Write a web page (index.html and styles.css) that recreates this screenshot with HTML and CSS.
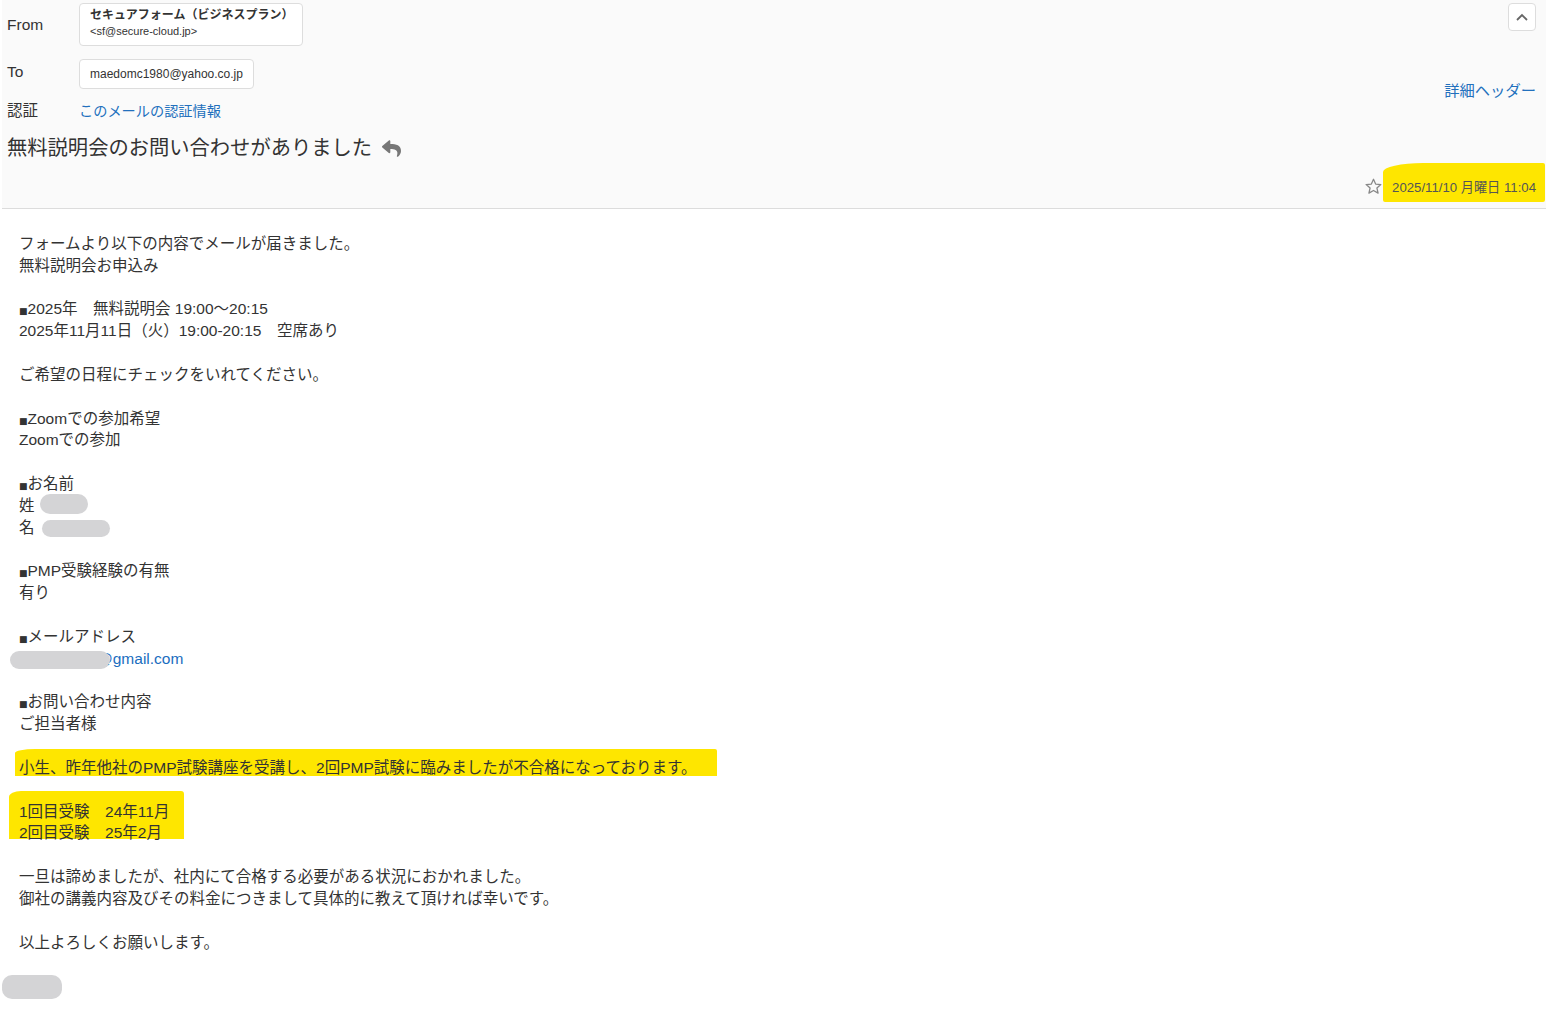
FILE: index.html
```html
<!DOCTYPE html>
<html lang="ja">
<head>
    <meta charset="UTF-8">
    <meta name="viewport" content="width=device-width, initial-scale=1.0">
    <title>無料説明会のお問い合わせがありました</title>
    <link rel="stylesheet" href="styles.css">
</head>
<body>
    <header class="mail-head">
        <div class="head-top">
            <div class="head-fields">
                <div class="field field--from">
                    <span class="label">From</span>
                    <div class="addr-box addr-box--from">
                        <div class="sender-name">セキュアフォーム（ビジネスプラン）</div>
                        <div class="sender-mail">&lt;sf@secure-cloud.jp&gt;</div>
                    </div>
                </div>
                <div class="field field--to">
                    <span class="label">To</span>
                    <div class="addr-box addr-box--to">maedomc1980@yahoo.co.jp</div>
                </div>
                <div class="field field--auth">
                    <span class="label">認証</span>
                    <a class="link auth-link" href="#">このメールの認証情報</a>
                </div>
                <h1 class="subject">無料説明会のお問い合わせがありました
                    <svg class="reply-icon" viewBox="0 0 512 512" width="19" height="19"><path d="M8.3 189.8L184.3 37.9C199.7 24.5 224 35.3 224 56v80.1c160.6 1.8 288 34 288 186.2 0 61.4-39.6 122.3-83.3 154.1-13.7 9.9-33.1-2.5-28.1-18.6 45.3-145-21.5-183.5-176.6-185.7V360c0 20.7-24.3 31.5-39.7 18.2l-176-152c-11.1-9.6-11.1-26.8 0-36.4z"/></svg>
                </h1>
            </div>
            <div class="head-side">
                <button class="collapse-btn">
                    <svg viewBox="0 0 16 16" width="16" height="16"><path d="M3 11l5-5 5 5" fill="none" stroke="#666" stroke-width="1.8"/></svg>
                </button>
                <a class="link detail-link" href="#">詳細ヘッダー</a>
            </div>
        </div>
        <div class="head-date">
            <svg class="star" viewBox="0 0 24 24" width="19" height="19"><path d="M12 2.8l2.7 6.1 6.6.6-5 4.4 1.5 6.5L12 17l-5.8 3.4 1.5-6.5-5-4.4 6.6-.6z" fill="none" stroke="#888" stroke-width="1.6" stroke-linejoin="round"/></svg>
            <span class="date">2025/11/10 月曜日 11:04</span>
        </div>
    </header>

    <main class="mail-body">
        <div class="para">
            <div class="line">フォームより以下の内容でメールが届きました。</div>
            <div class="line">無料説明会お申込み</div>
        </div>
        <div class="para">
            <div class="line"><span class="sq">■</span>2025年　無料説明会 19:00～20:15</div>
            <div class="line">2025年11月11日（火）19:00-20:15　空席あり</div>
        </div>
        <div class="para">
            <div class="line">ご希望の日程にチェックをいれてください。</div>
        </div>
        <div class="para">
            <div class="line"><span class="sq">■</span>Zoomでの参加希望</div>
            <div class="line">Zoomでの参加</div>
        </div>
        <div class="para">
            <div class="line"><span class="sq">■</span>お名前</div>
            <div class="line">姓<span class="redact redact--sei"></span></div>
            <div class="line">名<span class="redact redact--mei"></span></div>
        </div>
        <div class="para">
            <div class="line"><span class="sq">■</span>PMP受験経験の有無</div>
            <div class="line">有り</div>
        </div>
        <div class="para">
            <div class="line"><span class="sq">■</span>メールアドレス</div>
            <div class="line"><span class="redact redact--mail"></span><a class="link mail-link" href="#">@gmail.com</a></div>
        </div>
        <div class="para">
            <div class="line"><span class="sq">■</span>お問い合わせ内容</div>
            <div class="line">ご担当者様</div>
        </div>
        <div class="para marker marker--one">
            <div class="line">小生、昨年他社のPMP試験講座を受講し、2回PMP試験に臨みましたが不合格になっております。</div>
        </div>
        <div class="para marker marker--two">
            <div class="line">1回目受験　24年11月</div>
            <div class="line">2回目受験　25年2月</div>
        </div>
        <div class="para">
            <div class="line">一旦は諦めましたが、社内にて合格する必要がある状況におかれました。</div>
            <div class="line">御社の講義内容及びその料金につきまして具体的に教えて頂ければ幸いです。</div>
        </div>
        <div class="para">
            <div class="line">以上よろしくお願いします。</div>
        </div>
        <div class="para">
            <div class="line"><span class="redact redact--sign"></span></div>
        </div>
    </main>
</body>
</html>
```

FILE: styles.css
```css
body{
    margin: 0;
    background: #fff;
    color: #333;
    font-family: "Liberation Sans", "Noto Sans CJK JP", sans-serif;
}
.mail-head{
    margin-left: 2px;
    padding: 3px 10px 10px 5px;
    background: #fafafa;
    border-bottom: 1px solid #dcdcdc;
}
.head-top{
    display: flex;
    justify-content: space-between;
}
.field{
    display: flex;
    align-items: center;
}
.label{
    width: 72px;
    font-size: 15.5px;
    line-height: 20px;
    color: #333;
}
.addr-box{
    box-sizing: border-box;
    background: #fff;
    border: 1px solid #ddd;
    border-radius: 4px;
    padding: 0 10px;
    color: #333;
}
.addr-box--from{
    width: 224px;
    height: 43px;
    padding-top: 4px;
}
.sender-name{
    font-size: 12px;
    font-weight: bold;
    line-height: 15px;
}
.sender-mail{
    font-size: 11px;
    line-height: 17px;
}
.field--to{
    margin-top: 13px;
}
.field--to .label{
    margin-top: -4px;
}
.addr-box--to{
    height: 30px;
    line-height: 28px;
    font-size: 12px;
}
.field--auth{
    margin-top: 12px;
}
.link{
    color: #2270bd;
    text-decoration: none;
}
.auth-link{
    font-size: 14.2px;
    line-height: 20px;
}
.subject{
    margin: 14px 0 0;
    font-size: 20.3px;
    font-weight: normal;
    line-height: 26px;
    color: #333;
    display: flex;
    align-items: center;
    gap: 10px;
}
.reply-icon{
    fill: #777;
}
.head-side{
    display: flex;
    flex-direction: column;
    align-items: flex-end;
}
.collapse-btn{
    width: 28px;
    height: 28px;
    padding: 0;
    background: #fff;
    border: 1px solid #ddd;
    border-radius: 4px;
    display: flex;
    align-items: center;
    justify-content: center;
}
.detail-link{
    margin-top: 50px;
    font-size: 15.3px;
    line-height: 20px;
}
.head-date{
    margin-top: 13px;
    height: 24px;
    display: flex;
    justify-content: flex-end;
    align-items: center;
    gap: 9px;
}
.date{
    position: relative;
    z-index: 0;
    font-size: 13.2px;
    color: #555;
}
.date::before{
    content: "";
    position: absolute;
    z-index: -1;
    top: -14px;
    bottom: -6px;
    left: -9px;
    right: -9px;
    background: #fee600;
    border-radius: 40px 2px 2px 2px / 9px 2px 2px 2px;
}
.mail-body{
    padding: 24px 19px;
    font-size: 15.5px;
    line-height: 21.84px;
}
.para{
    margin-bottom: 21.84px;
}
.line{
    height: 21.84px;
    white-space: nowrap;
}
.sq{
    font-family: "DejaVu Sans", sans-serif;
    font-size: 9px;
}
.mail-link{
    color: #1a6dc0;
}
.redact{
    display: inline-block;
    background: #d4d4d6;
    border-radius: 10px;
    vertical-align: middle;
}
.redact--sei{
    width: 48px;
    height: 20px;
    margin-left: 5px;
    margin-top: -6px;
}
.redact--mei{
    width: 68px;
    height: 17px;
    margin-left: 7px;
}
.redact--mail{
    position: relative;
    z-index: 1;
    width: 100px;
    height: 18px;
    margin-left: -9px;
    margin-right: -13px;
}
.redact--sign{
    width: 60px;
    height: 20px;
    margin-left: -17px;
    border-radius: 12px;
    box-shadow: 0 2px 0 #d4d4d6, 0 -2px 0 #d4d4d6;
}
.marker{
    position: relative;
    z-index: 0;
    width: fit-content;
}
.marker::before{
    content: "";
    position: absolute;
    z-index: -1;
    background: #fee600;
}
.marker--one::before{
    top: -8px;
    bottom: 3px;
    left: -4px;
    right: -20px;
    border-radius: 20px 2px 0 0 / 4px 2px 0 0;
}
.marker--two::before{
    top: -10px;
    bottom: 5px;
    left: -10px;
    right: -15px;
    border-radius: 12px 3px 0 0 / 6px 3px 0 0;
}
```
